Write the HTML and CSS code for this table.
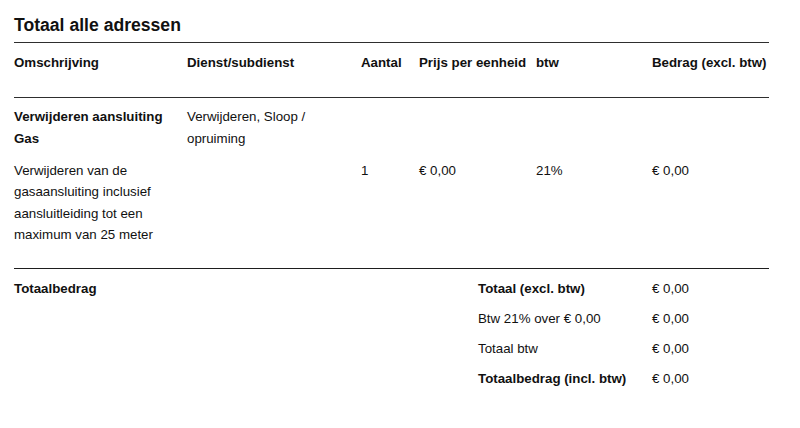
FILE: index.html
```html
<!DOCTYPE html>
<html lang="nl">
<head>
<meta charset="utf-8">
<title>Totaal alle adressen</title>
<link rel="stylesheet" href="styles.css">
</head>
<body>
<div class="page">
  <h1 class="title">Totaal alle adressen</h1>
  <div class="grid head">
    <div>Omschrijving</div>
    <div>Dienst/subdienst</div>
    <div>Aantal</div>
    <div>Prijs per eenheid</div>
    <div>btw</div>
    <div>Bedrag (excl. btw)</div>
  </div>
  <div class="items">
    <div class="grid item-title">
      <div class="strong">Verwijderen aansluiting Gas</div>
      <div>Verwijderen, Sloop / opruiming</div>
    </div>
    <div class="grid item-line">
      <div>Verwijderen van de gasaansluiting inclusief aansluitleiding tot een maximum van 25 meter</div>
      <div></div>
      <div>1</div>
      <div>€ 0,00</div>
      <div>21%</div>
      <div>€ 0,00</div>
    </div>
  </div>
  <div class="totals">
    <div class="total-row">
      <div class="strong">Totaalbedrag</div>
      <div class="strong">Totaal (excl. btw)</div>
      <div>€ 0,00</div>
    </div>
    <div class="total-row">
      <div></div>
      <div>Btw 21% over € 0,00</div>
      <div>€ 0,00</div>
    </div>
    <div class="total-row">
      <div></div>
      <div>Totaal btw</div>
      <div>€ 0,00</div>
    </div>
    <div class="total-row">
      <div></div>
      <div class="strong">Totaalbedrag (incl. btw)</div>
      <div>€ 0,00</div>
    </div>
  </div>
</div>
</body>
</html>
```

FILE: styles.css
```css
html, body {
  margin: 0;
  padding: 0;
  background: #ffffff;
}

body {
  font-family: "Liberation Sans", Arial, sans-serif;
  font-size: 13.3px;
  line-height: 21.5px;
  color: #111111;
}

.page {
  width: 755px;
  padding: 13.5px 0 0 14px;
}

.title {
  margin: 0 0 6.5px 0;
  font-size: 17.6px;
  line-height: 22px;
  font-weight: bold;
}

.grid {
  display: grid;
  grid-template-columns: 173px 174px 58px 117px 116px 117px;
}

.grid > div {
  padding-right: 8px;
}

.head {
  border-top: 1px solid #2e2e2e;
  border-bottom: 1px solid #2e2e2e;
  padding: 8.5px 0 24px 0;
  font-weight: bold;
}

.head > div {
  padding-right: 0;
  white-space: nowrap;
}

.items {
  padding: 8px 0 22.5px 0;
  border-bottom: 1px solid #1e1e1e;
}

.item-line {
  margin-top: 10.5px;
}

.strong {
  font-weight: bold;
}

.totals {
  padding-top: 8.5px;
  display: flex;
  flex-direction: column;
  gap: 8.5px;
}

.total-row {
  display: grid;
  grid-template-columns: 464px 174px 117px;
}
```
